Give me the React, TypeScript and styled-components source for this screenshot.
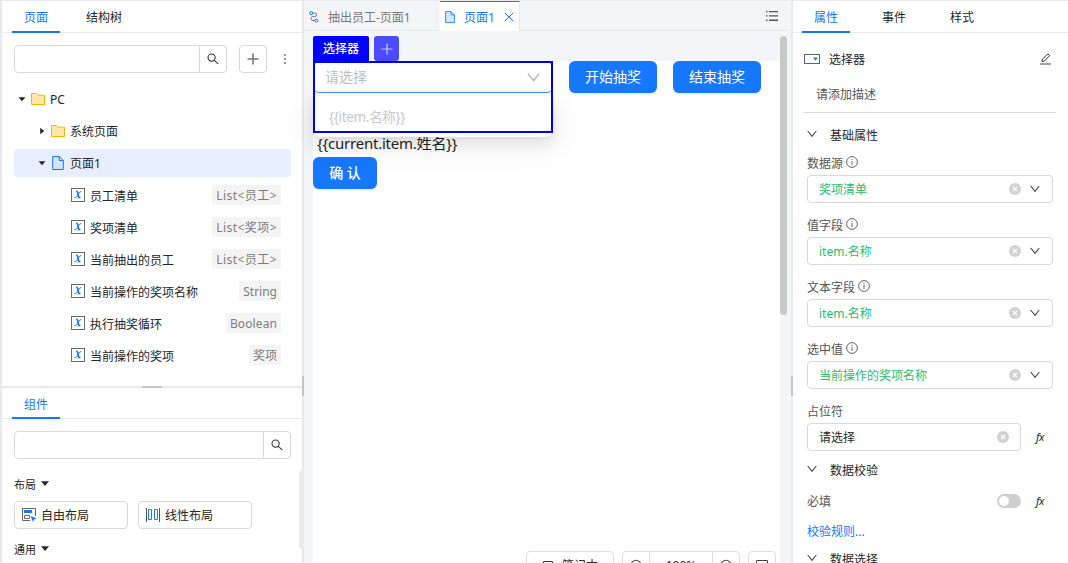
import React from "react";
import styled, { createGlobalStyle, css } from "styled-components";

const GlobalStyle = createGlobalStyle`
  * { box-sizing: border-box; }
  body {
    margin: 0;
    font-family: "Noto Sans", "Noto Sans CJK SC", sans-serif;
    font-size: 12px;
    color: #262626;
    background: #fff;
  }
  svg { display: block; flex: none; }
`;

const BLUE = "#1677ff";
const LINE = "#e9eaec";

const Shell = styled.div`
  display: flex;
  width: 1068px;
  height: 563px;
  overflow: hidden;
  border-top: 1px solid ${LINE};
  border-left: 2px solid ${LINE};
  white-space: nowrap;
`;

const LeftPanel = styled.aside`
  width: 300px;
  display: flex;
  flex-direction: column;
  flex: none;
`;

const Splitter = styled.div<{ $horizontal?: boolean }>`
  flex: none;
  display: flex;
  background: ${LINE};
  ${(p) =>
    p.$horizontal
      ? css`height: 2px; justify-content: center;`
      : css`width: 2px; flex-direction: column;`}
`;

const SplitterGrip = styled.div<{ $horizontal?: boolean }>`
  background: #c4c5c7;
  width: ${(p) => (p.$horizontal ? "20px" : "2px")};
  height: ${(p) => (p.$horizontal ? "2px" : "20px")};
  margin-top: ${(p) => (p.$horizontal ? 0 : 375)}px;
`;

const TabBar = styled.nav<{ $gap: number; $inset: number; $height: number }>`
  display: flex;
  flex: none;
  height: ${(p) => p.$height}px;
  gap: ${(p) => p.$gap}px;
  padding-left: ${(p) => p.$inset}px;
  box-shadow: inset 0 -1px 0 ${LINE};
`;

const Tab = styled.div<{ $active?: boolean }>`
  padding: 0 12px;
  height: 100%;
  line-height: 33px;
  color: ${(p) => (p.$active ? BLUE : "#262626")};
  border-bottom: 2px solid ${(p) => (p.$active ? BLUE : "transparent")};
`;

const SearchRow = styled.div`
  display: flex;
  flex: none;
  padding: 12px 11px 0 12px;
`;

const SearchBox = styled.div<{ $width: number }>`
  width: ${(p) => p.$width}px;
  height: 28px;
  display: flex;
  justify-content: flex-end;
  border: 1px solid #d9d9d9;
  border-radius: 4px;
`;

const SearchButton = styled.div`
  width: 27px;
  border-left: 1px solid #d9d9d9;
  display: flex;
  align-items: center;
  justify-content: center;
`;

const SquareButton = styled.div`
  width: 28px;
  height: 28px;
  margin-left: 12px;
  border: 1px solid #d9d9d9;
  border-radius: 4px;
  display: flex;
  align-items: center;
  justify-content: center;
`;

const MoreButton = styled.div`
  display: flex;
  align-items: center;
  margin-left: 16px;
`;

const Tree = styled.div`
  display: flex;
  flex-direction: column;
  gap: 4px;
  padding: 12px 11px 0 12px;
  height: 313px;
  flex: none;
`;

const TreeRow = styled.div<{ $indent: number; $selected?: boolean }>`
  display: flex;
  align-items: center;
  height: 28px;
  flex: none;
  padding-right: 10px;
  padding-left: ${(p) => p.$indent}px;
  border-radius: 4px;
  background: ${(p) => (p.$selected ? "#e6eeff" : "transparent")};
`;

const RowIcon = styled.span<{ $before: number; $after: number }>`
  margin-left: ${(p) => p.$before}px;
  margin-right: ${(p) => p.$after}px;
`;

const VariableName = styled.span`
  padding-top: 1px;
`;

const TypeTag = styled.span<{ $spacing: number }>`
  margin-left: auto;
  height: 20px;
  line-height: 21px;
  padding: 0 4px;
  color: #7d7d7d;
  background: #f4f4f4;
  letter-spacing: ${(p) => p.$spacing}px;
`;

const Palette = styled.div`
  display: flex;
  flex: 1;
  min-height: 0;
`;

const PaletteBody = styled.div`
  flex: 1;
  padding: 15px 0 0 12px;
`;

const PaletteScroll = styled.div`
  width: 3px;
  height: 78px;
  margin-top: 12px;
  border-radius: 2px 0 0 2px;
  background: ${LINE};
`;

const GroupTitle = styled.div`
  display: flex;
  align-items: center;
  gap: 5px;
  height: 20px;
  font-size: 11px;
`;

const CardRow = styled.div`
  display: flex;
  gap: 10px;
  padding: 7px 0 10px;
`;

const ComponentCard = styled.div`
  display: flex;
  align-items: center;
  gap: 5px;
  width: 114px;
  height: 28px;
  padding-left: 7px;
  border: 1px solid #d9d9d9;
  border-radius: 4px;
`;

const Center = styled.main`
  position: relative;
  width: 487px;
  flex: none;
  display: flex;
  flex-direction: column;
  background: #f4f5f8;
`;

const FileTabs = styled.div`
  display: flex;
  height: 30px;
  flex: none;
  box-shadow: inset 0 -1px 0 ${LINE};
`;

const FileTab = styled.div<{ $active?: boolean }>`
  display: flex;
  align-items: center;
  height: 30px;
  width: ${(p) => (p.$active ? 80 : 133)}px;
  margin-right: 3px;
  padding-left: 5px;
  color: ${(p) => (p.$active ? BLUE : "#777")};
  background: ${(p) => (p.$active ? "#fff" : "transparent")};
  border-top: 1px solid ${(p) => (p.$active ? BLUE : "transparent")};
  border-right: 1px solid ${LINE};
`;

const FileName = styled.span<{ $before: number; $after?: number }>`
  margin-left: ${(p) => p.$before}px;
  margin-right: ${(p) => p.$after ?? 0}px;
`;

const ListToggle = styled.div`
  margin-left: auto;
  padding-right: 13px;
  display: flex;
  align-items: center;
`;

const Workspace = styled.div`
  display: flex;
  flex: 1;
  padding-left: 9px;
  min-height: 0;
`;

const CanvasColumn = styled.div`
  width: 467px;
  display: flex;
  flex-direction: column;
`;

const SelectionBar = styled.div`
  display: flex;
  gap: 5px;
  height: 30px;
  flex: none;
  padding-top: 5px;
`;

const SelectionName = styled.div`
  width: 56px;
  background: #0000ff;
  color: #fff;
  font-weight: 500;
  line-height: 25px;
  text-align: center;
  border-radius: 2px 2px 0 0;
`;

const SelectionAdd = styled.div`
  width: 25px;
  background: #4b4bff;
  border-radius: 3px;
  display: flex;
  align-items: center;
  justify-content: center;
`;

const Canvas = styled.div`
  flex: 1;
  background: #fff;
`;

const CanvasRow = styled.div`
  display: flex;
  gap: 16px;
`;

const SelectWidget = styled.div`
  position: relative;
  width: 240px;
  height: 32px;
  display: flex;
  align-items: center;
  justify-content: space-between;
  padding: 0 12px 2px 11px;
  font-size: 14px;
  color: #bfbfbf;
  border: 1px solid #4096ff;
  border-radius: 6px;
  > svg { margin-top: 2px; }
`;

const SelectPopup = styled.div`
  position: absolute;
  top: 34px;
  left: -1px;
  width: 240px;
  height: 41px;
  padding: 4px 16px;
  line-height: 34px;
  font-size: 13.5px;
  letter-spacing: -0.33px;
  color: #c8c8c8;
  background: #fff;
  border-radius: 8px;
  box-shadow: 0 6px 16px rgba(0, 0, 0, 0.08), 0 3px 6px -4px rgba(0, 0, 0, 0.12),
    0 9px 28px 8px rgba(0, 0, 0, 0.05);
`;

const SelectionFrame = styled.div`
  position: absolute;
  top: -1px;
  left: -1px;
  width: 240px;
  height: 72px;
  border: 2px solid #0000f0;
`;

const PrimaryButton = styled.div<{ $width: number; $strong?: boolean }>`
  width: ${(p) => p.$width}px;
  height: 32px;
  line-height: 32px;
  text-align: center;
  font-size: 14px;
  font-weight: ${(p) => (p.$strong ? 500 : 400)};
  color: #fff;
  background: ${BLUE};
  border-radius: 6px;
  box-shadow: 0 2px 0 rgba(5, 145, 255, 0.1);
`;

const BoundText = styled.div`
  margin-top: 38px;
  height: 26px;
  line-height: 24px;
  padding-left: 4px;
  font-size: 15px;
  letter-spacing: -0.22px;
  color: #1f1f1f;
`;

const CanvasScroll = styled.div`
  width: 7px;
  height: 279px;
  margin-top: 5px;
  border-radius: 4px;
  background: #c8c8c8;
`;

const ViewTools = styled.div`
  position: absolute;
  top: 550px;
  left: 222px;
  display: flex;
  gap: 8px;
`;

const ToolGroup = styled.div`
  display: flex;
  height: 28px;
  border: 1px solid #dcdfe6;
  border-radius: 4px;
  background: #fff;
`;

const ToolCell = styled.div<{ $width: number; $divided?: boolean }>`
  width: ${(p) => p.$width}px;
  display: flex;
  align-items: center;
  justify-content: center;
  gap: 8px;
  border-right: ${(p) => (p.$divided ? "1px solid #dcdfe6" : "none")};
  svg { margin-top: 2px; }
`;

const RightPanel = styled.aside`
  flex: 1;
  display: flex;
  flex-direction: column;
`;

const WidgetHead = styled.div`
  display: flex;
  flex: none;
  align-items: center;
  height: 28px;
  margin: 12px 17px 0 11px;
`;

const WidgetName = styled.span`
  margin-left: 9px;
  margin-right: auto;
`;

const Description = styled.div`
  height: 40px;
  flex: none;
  margin: 0 12px 0 11px;
  padding: 12px 12px 0;
  line-height: 20px;
  color: #555;
  border-bottom: 1px solid #d9d9d9;
`;

const Section = styled.div<{ $height: number; $offset?: number }>`
  display: flex;
  align-items: center;
  gap: 13px;
  height: ${(p) => p.$height}px;
  flex: none;
  padding-left: 14px;
  padding-top: ${(p) => p.$offset ?? 0}px;
  svg { margin-bottom: 3px; }
`;

const SectionTitle = styled.span`
  padding-top: 0;
`;

const Field = styled.div`
  height: 62px;
  flex: none;
  padding-left: 14px;
`;

const FieldLabel = styled.div`
  display: flex;
  align-items: center;
  gap: 3px;
  height: 24px;
  line-height: 24px;
  color: #555;
  svg { margin-bottom: 2px; }
`;

const FieldName = styled.span`
  padding-top: 1px;
`;

const Control = styled.div<{ $width?: number; $plain?: boolean }>`
  display: flex;
  align-items: center;
  width: ${(p) => p.$width ?? 246}px;
  height: 28px;
  padding: 0 ${(p) => (p.$plain ? 11 : 12)}px 0 11px;
  border: 1px solid #d9d9d9;
  border-radius: 4px;
  color: ${(p) => (p.$plain ? "#262626" : "#1fc06b")};
`;

const ControlIcons = styled.span`
  margin-left: auto;
  display: flex;
  align-items: center;
  gap: 9px;
`;

const Inline = styled.div`
  display: flex;
  align-items: center;
`;

const Formula = styled.span`
  margin-left: 15px;
  padding-bottom: 2px;
  font-style: italic;
  font-size: 11px;
  color: #262626;
  letter-spacing: -0.4px;
`;

const SwitchRow = styled.div`
  display: flex;
  align-items: center;
  height: 44px;
  flex: none;
  padding-left: 14px;
  color: #555;
`;

const Switch = styled.span`
  width: 24px;
  height: 14px;
  margin-left: 166px;
  padding: 2px;
  border-radius: 7px;
  background: #cfcfcf;
  &::after {
    content: "";
    display: block;
    width: 10px;
    height: 10px;
    border-radius: 50%;
    background: #fff;
  }
`;

const RuleLink = styled.div`
  height: 16px;
  line-height: 18px;
  flex: none;
  padding-left: 14px;
  color: ${BLUE};
`;

const SearchIcon = () => (
  <svg width="14" height="14" viewBox="0 0 14 14" fill="none" stroke="#333" strokeWidth="1.1">
    <circle cx="5.6" cy="5.6" r="3.6" />
    <path d="M8.3 8.3 L12.2 11.9" />
  </svg>
);

const Plus = ({ color, weight = 1.3 }: { color: string; weight?: number }) => (
  <svg width="12" height="12" viewBox="0 0 12 12" stroke={color} strokeWidth={weight}>
    <path d="M6 0.5V11.5M0.5 6H11.5" />
  </svg>
);

const Caret = ({ right }: { right?: boolean }) => (
  <svg width="8" height="8" viewBox="0 0 8 8" fill="#262626">
    <path d={right ? "M2.2 0.8V7.2L6.2 4Z" : "M0.6 2.2H7.4L4 6.2Z"} />
  </svg>
);

const GroupCaret = () => (
  <svg width="8" height="6" viewBox="0 0 8 6" fill="#262626">
    <path d="M0 0.3H8L4 5Z" />
  </svg>
);

const Folder = () => (
  <svg width="14" height="12" viewBox="0 0 14 12" fill="#ffe7b0" stroke="#fbb500">
    <path d="M0.5 0.5H5.2L7 2.2H13.5V11.5H0.5Z" />
  </svg>
);

const PageIcon = ({ small }: { small?: boolean }) => (
  <svg width={small ? 10 : 12} height={small ? 12 : 14} viewBox="0 0 12 14" fill="#d3e4ff" stroke={BLUE}>
    <path d="M0.7 0.5H7.5L11.3 4.3V13.5H0.7Z" />
    <path d="M7.3 0.7V4.5H11.2" />
  </svg>
);

const VarIcon = () => (
  <svg width="14" height="14" viewBox="0 0 14 14" fill="none">
    <rect x="0.5" y="0.5" width="13" height="13" stroke="#6b6b6b" />
    <path d="M5.2 3.4C6.6 3.2 6.9 4.6 7.1 6.6S7.6 10 9.4 9.4" stroke={BLUE} strokeWidth="1.7" />
    <path d="M10.4 3.7C8.8 3.2 7.6 5.7 6.9 7.2S4.9 10.2 3.4 9.3" stroke={BLUE} strokeWidth="1" />
  </svg>
);

const Chevron = ({ size = 10, color = "#444" }: { size?: number; color?: string }) => (
  <svg width={size} height={size} viewBox="0 0 11 11" fill="none" stroke={color} strokeWidth="1.2">
    <path d="M0.8 2.2L5.5 8.2L10.2 2.2" />
  </svg>
);

const Info = () => (
  <svg width="12" height="12" viewBox="0 0 12 12" fill="none" stroke="#666">
    <circle cx="6" cy="6" r="5.4" />
    <path d="M6 5V9M6 2.8V4" />
  </svg>
);

const Clear = () => (
  <svg width="12" height="12" viewBox="0 0 12 12">
    <circle cx="6" cy="6" r="6" fill="#d2d2d2" />
    <path d="M4 4L8 8M8 4L4 8" stroke="#fff" strokeWidth="1.1" />
  </svg>
);

const Magnifier = ({ plus }: { plus?: boolean }) => (
  <svg width="14" height="14" viewBox="0 0 14 14" fill="none" stroke="#444" strokeWidth="1.1">
    <circle cx="7" cy="6" r="4.8" />
    <path d={plus ? "M4.8 6H9.2M7 3.8V8.2M10.4 9.5L13 12.1" : "M4.8 6H9.2M10.4 9.5L13 12.1"} />
  </svg>
);

const variables: { name: string; type: string; spacing: number }[] = [
  { name: "员工清单", type: "List<员工>", spacing: 0.45 },
  { name: "奖项清单", type: "List<奖项>", spacing: 0.45 },
  { name: "当前抽出的员工", type: "List<员工>", spacing: 0.45 },
  { name: "当前操作的奖项名称", type: "String", spacing: 0 },
  { name: "执行抽奖循环", type: "Boolean", spacing: 0.1 },
  { name: "当前操作的奖项", type: "奖项", spacing: 0 },
];

const bindings = [
  { label: "数据源", value: "奖项清单" },
  { label: "值字段", value: "item.名称" },
  { label: "文本字段", value: "item.名称" },
  { label: "选中值", value: "当前操作的奖项名称" },
];

export default function App() {
  return (
    <>
      <GlobalStyle />
      <Shell>
        <LeftPanel>
          <TabBar $gap={14} $inset={10} $height={32}>
            <Tab $active>页面</Tab>
            <Tab>结构树</Tab>
          </TabBar>
          <SearchRow>
            <SearchBox $width={213}>
              <SearchButton><SearchIcon /></SearchButton>
            </SearchBox>
            <SquareButton><Plus color="#777" weight={1.6} /></SquareButton>
            <MoreButton>
              <svg width="4" height="12" viewBox="0 0 4 12" fill="#999">
                <path d="M1 1h2v2H1zM1 5h2v2H1zM1 9h2v2H1z" />
              </svg>
            </MoreButton>
          </SearchRow>
          <Tree>
            <TreeRow $indent={4}>
              <Caret />
              <RowIcon $before={5} $after={5}><Folder /></RowIcon>
              PC
            </TreeRow>
            <TreeRow $indent={24}>
              <Caret right />
              <RowIcon $before={5} $after={5}><Folder /></RowIcon>
              系统页面
            </TreeRow>
            <TreeRow $indent={24} $selected>
              <Caret />
              <RowIcon $before={6} $after={6}><PageIcon /></RowIcon>
              页面1
            </TreeRow>
            {variables.map((v) => (
              <TreeRow key={v.name} $indent={57}>
                <RowIcon $before={0} $after={5}><VarIcon /></RowIcon>
                <VariableName>{v.name}</VariableName>
                <TypeTag $spacing={v.spacing}>{v.type}</TypeTag>
              </TreeRow>
            ))}
          </Tree>
          <Splitter $horizontal><SplitterGrip $horizontal /></Splitter>
          <TabBar $gap={14} $inset={10} $height={31}>
            <Tab $active>组件</Tab>
          </TabBar>
          <SearchRow>
            <SearchBox $width={277}>
              <SearchButton><SearchIcon /></SearchButton>
            </SearchBox>
          </SearchRow>
          <Palette>
            <PaletteBody>
              <GroupTitle>布局 <GroupCaret /></GroupTitle>
              <CardRow>
                <ComponentCard>
                  <svg width="14" height="14" viewBox="0 0 14 14" fill="none">
                    <path d="M13.5 8V0.5H0.5V12.5H8" stroke="#666" />
                    <path d="M2 2H10V5H2Z" fill={BLUE} />
                    <path d="M2.5 7.5H7.5V10.5H2.5Z" stroke="#666" />
                    <path d="M8.5 8L14.5 10.3L12 11.4L11 14Z" fill={BLUE} />
                  </svg>
                  自由布局
                </ComponentCard>
                <ComponentCard>
                  <svg width="14" height="14" viewBox="0 0 14 14" fill="none">
                    <path d="M0.5 0V14M13.5 0V14" stroke="#555" />
                    <path d="M2.5 1.5H5.5V11.5H2.5ZM8.5 1.5H11.5V11.5H8.5Z" stroke={BLUE} />
                  </svg>
                  线性布局
                </ComponentCard>
              </CardRow>
              <GroupTitle>通用 <GroupCaret /></GroupTitle>
            </PaletteBody>
            <PaletteScroll />
          </Palette>
        </LeftPanel>
        <Splitter><SplitterGrip /></Splitter>

        <Center>
          <FileTabs>
            <FileTab>
              <svg width="10" height="12" viewBox="0 0 10 12" fill="none">
                <path d="M3.8 2H5.8A1.7 1.7 0 0 1 5.8 5.6H4A2 2 0 0 0 4 9.6H5.8" stroke="#777" />
                <circle cx="2.2" cy="2.2" r="1.5" stroke={BLUE} />
                <circle cx="7.4" cy="9.6" r="1.5" stroke={BLUE} />
              </svg>
              <FileName $before={9}>抽出员工-页面1</FileName>
            </FileTab>
            <FileTab $active>
              <PageIcon small />
              <FileName $before={9} $after={9}>页面1</FileName>
              <svg width="10" height="10" viewBox="0 0 10 10" stroke={BLUE}>
                <path d="M0.7 0.7L9.3 9.3M9.3 0.7L0.7 9.3" />
              </svg>
            </FileTab>
            <ListToggle>
              <svg width="12" height="10" viewBox="0 0 12 10" fill="#555">
                <path d="M0 0h1.5v1.3H0zM3 0h9v1.3H3zM0 4.3h1.5v1.3H0zM3 4.3h9v1.3H3zM0 8.6h1.5v1.3H0zM3 8.6h9v1.3H3z" />
              </svg>
            </ListToggle>
          </FileTabs>
          <Workspace>
            <CanvasColumn>
              <SelectionBar>
                <SelectionName>选择器</SelectionName>
                <SelectionAdd><Plus color="#c8c8ff" weight={1.2} /></SelectionAdd>
              </SelectionBar>
              <Canvas>
                <CanvasRow>
                  <SelectWidget>
                    请选择
                    <Chevron size={13} color="#b5b5b5" />
                    <SelectPopup>{"{{item.名称}}"}</SelectPopup>
                    <SelectionFrame />
                  </SelectWidget>
                  <PrimaryButton $width={88}>开始抽奖</PrimaryButton>
                  <PrimaryButton $width={88}>结束抽奖</PrimaryButton>
                </CanvasRow>
                <BoundText>{"{{current.item.姓名}}"}</BoundText>
                <PrimaryButton $width={64} $strong>确 认</PrimaryButton>
              </Canvas>
            </CanvasColumn>
            <CanvasScroll />
          </Workspace>
          <ViewTools>
            <ToolGroup>
              <ToolCell $width={86}>
                <svg width="12" height="12" viewBox="0 0 12 12" fill="none" stroke="#333">
                  <path d="M1.5 1.5H10.5V8.5H1.5ZM0 11H12" />
                </svg>
                笔记本
              </ToolCell>
            </ToolGroup>
            <ToolGroup>
              <ToolCell $width={27} $divided><Magnifier /></ToolCell>
              <ToolCell $width={63} $divided>100%</ToolCell>
              <ToolCell $width={26}><Magnifier plus /></ToolCell>
            </ToolGroup>
            <ToolGroup>
              <ToolCell $width={26}>
                <svg width="12" height="12" viewBox="0 0 12 12" fill="none" stroke="#444">
                  <path d="M0.5 0.5H11.5V11.5H0.5ZM3 3L5 5M9 3L7 5" />
                </svg>
              </ToolCell>
            </ToolGroup>
          </ViewTools>
        </Center>
        <Splitter><SplitterGrip /></Splitter>

        <RightPanel>
          <TabBar $gap={20} $inset={9} $height={32}>
            <Tab $active>属性</Tab>
            <Tab>事件</Tab>
            <Tab>样式</Tab>
          </TabBar>
          <WidgetHead>
            <svg width="16" height="10" viewBox="0 0 16 10" fill="none">
              <rect x="0.5" y="0.5" width="15" height="9" stroke="#666" />
              <path d="M9 3.6H14L11.5 6.8Z" fill={BLUE} />
            </svg>
            <WidgetName>选择器</WidgetName>
            <svg width="11" height="12" viewBox="0 0 11 12" fill="none" stroke="#333">
              <path d="M2 8.6L2.5 6.2L7.8 0.9L9.6 2.7L4.3 8L2 8.6Z" />
              <path d="M0 11H11" stroke="#777" strokeWidth="1.4" />
            </svg>
          </WidgetHead>
          <Description>请添加描述</Description>
          <Section $height={38} $offset={6}>
            <Chevron />
            <SectionTitle>基础属性</SectionTitle>
          </Section>
          {bindings.map((b) => (
            <Field key={b.label}>
              <FieldLabel>
                <FieldName>{b.label}</FieldName>
                <Info />
              </FieldLabel>
              <Control>
                {b.value}
                <ControlIcons><Clear /><Chevron /></ControlIcons>
              </Control>
            </Field>
          ))}
          <Field>
            <FieldLabel><FieldName>占位符</FieldName></FieldLabel>
            <Inline>
              <Control $width={214} $plain>
                请选择
                <ControlIcons><Clear /></ControlIcons>
              </Control>
              <Formula>fx</Formula>
            </Inline>
          </Field>
          <Section $height={18}>
            <Chevron />
            <SectionTitle>数据校验</SectionTitle>
          </Section>
          <SwitchRow>必填<Switch /><Formula>fx</Formula></SwitchRow>
          <RuleLink>校验规则...</RuleLink>
          <Section $height={40}>
            <Chevron />
            <SectionTitle>数据选择</SectionTitle>
          </Section>
        </RightPanel>
      </Shell>
    </>
  );
}
